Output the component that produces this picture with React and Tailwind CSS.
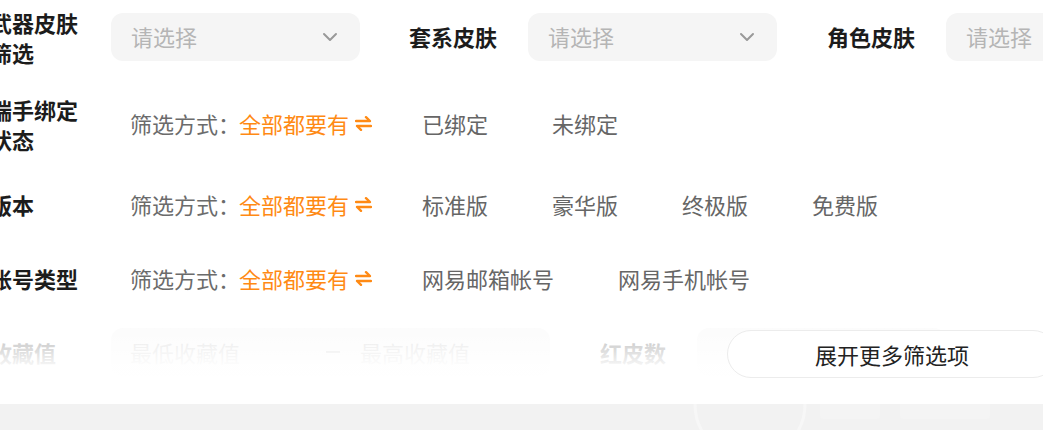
import React from 'react';
import { ChevronDown } from 'lucide-react';

const font = { fontFamily: '"Noto Sans CJK SC", "Noto Sans", sans-serif' };

function SwapIcon() {
    return (
        <svg width="17" height="15" viewBox="0 0 17 15" fill="none" className="ml-[6px] shrink-0">
            <path d="M1 5 H15 L11 1.2" stroke="#ff8a14" strokeWidth="2.4" strokeLinecap="round" strokeLinejoin="round" />
            <path d="M16 10 H2 L6 13.8" stroke="#ff8a14" strokeWidth="2.4" strokeLinecap="round" strokeLinejoin="round" />
        </svg>
    );
}

function Label({ children, className = '' }) {
    return (
        <div className={`w-[100px] mr-[21px] shrink-0 text-[22px] leading-[30px] font-bold text-[#1c1c1c] ${className}`}>
            {children}
        </div>
    );
}

function Select({ className = '' }) {
    return (
        <div className={`h-[48px] w-[249px] shrink-0 rounded-[12px] bg-[#f5f5f5] flex items-center justify-between pl-[20px] pr-[18px] ${className}`}>
            <span className="text-[22px] text-[#b5b5b5]">请选择</span>
            <ChevronDown size={24} strokeWidth={2} className="text-[#999]" />
        </div>
    );
}

function ModeRow({ label, options }) {
    return (
        <div className="flex items-center min-h-[48px]">
            <Label>{label}</Label>
            <div className="flex items-center pl-[19px] text-[22px]">
                <span className="text-[#6b6b6b]">筛选方式：</span>
                <span className="text-[#ff8a14] -ml-[1px]">全部都要有</span>
                <SwapIcon />
                <div className="flex items-center gap-[64px] ml-[50px] text-[#666]">
                    {options.map(o => (
                        <span key={o}>{o}</span>
                    ))}
                </div>
            </div>
        </div>
    );
}

export default function App() {
    return (
        <div className="w-[1043px] h-[447px] overflow-hidden bg-white" style={font}>
            <div className="relative h-[404px] overflow-hidden">
                <div className="flex flex-col gap-[26px] pt-[6px] ml-[-10px]">
                    {/* skin pickers */}
                    <div className="flex items-center min-h-[61px]">
                        <Label>武器皮肤筛选</Label>
                        <Select />
                        <div className="ml-[49px] mr-[31px] text-[22px] font-bold text-[#1c1c1c] shrink-0">套系皮肤</div>
                        <Select />
                        <div className="ml-[50px] mr-[31px] text-[22px] font-bold text-[#1c1c1c] shrink-0">角色皮肤</div>
                        <Select />
                    </div>

                    <div className="min-h-[61px] flex items-center">
                        <ModeRow label="端手绑定状态" options={['已绑定', '未绑定']} />
                    </div>
                    <ModeRow label="版本" options={['标准版', '豪华版', '终极版', '免费版']} />
                    <ModeRow label="帐号类型" options={['网易邮箱帐号', '网易手机帐号']} />

                    {/* collection value range */}
                    <div className="flex items-center min-h-[48px]">
                        <Label>收藏值</Label>
                        <div className="h-[48px] w-[439px] shrink-0 rounded-[12px] bg-[#f5f5f5] flex items-center pl-[19px] text-[22px] text-[#b5b5b5]">
                            <span>最低收藏值</span>
                            <span className="ml-[86px] w-[14px] h-[1.5px] bg-[#b5b5b5]" />
                            <span className="ml-[20px]">最高收藏值</span>
                        </div>
                        <div className="ml-[50px] mr-[31px] text-[22px] font-bold text-[#1c1c1c] shrink-0">红皮数</div>
                        <div className="h-[48px] w-[249px] shrink-0 rounded-[12px] bg-[#f5f5f5]" />
                    </div>
                </div>

                {/* fade over the last row + expand button */}
                <div className="absolute left-0 right-0 top-[316px] bottom-0 bg-linear-to-b from-white/60 via-white/95 via-[55%] to-white">
                    <button className="absolute left-[727px] top-[14px] w-[330px] h-[48px] rounded-full border border-[#ececec] bg-white text-[22px] text-[#222] flex items-center justify-center">
                        展开更多筛选项
                    </button>
                </div>
            </div>

            <div className="relative h-[26px] bg-[#f2f2f2] overflow-hidden">
                <svg width="360" height="120" viewBox="0 0 360 120" className="absolute left-[690px] top-[-60px]" fill="none">
                    <circle cx="60" cy="60" r="55" stroke="#f7f7f7" strokeWidth="3" />
                    <rect x="130" y="45" width="60" height="30" rx="4" fill="#f4f4f4" />
                    <rect x="210" y="45" width="90" height="30" rx="4" fill="#f4f4f4" />
                </svg>
            </div>
            <div className="h-[17px] bg-white" />
        </div>
    );
}
